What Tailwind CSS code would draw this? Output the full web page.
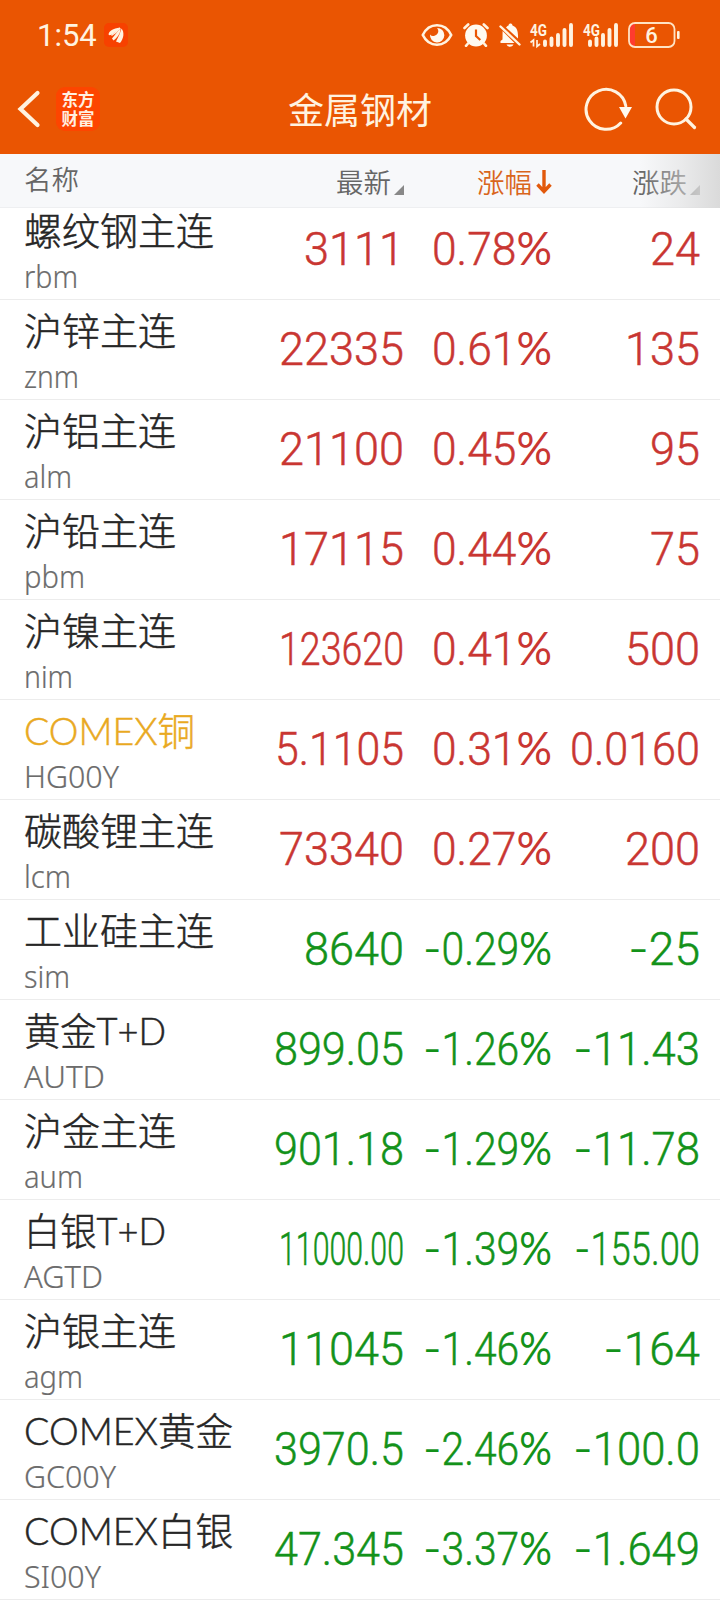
<!DOCTYPE html>
<html lang="zh-CN">
<head>
  <meta charset="UTF-8" />
  <title>金属钢材</title>
  <meta name="viewport" content="width=device-width, initial-scale=1" />
  <script src="https://cdn.jsdelivr.net/npm/@tailwindcss/browser@4"></script>
</head>
<body class="w-[720px] h-[1600px] overflow-hidden bg-white font-['Noto_Sans_CJK_SC',sans-serif]">

  <header class="h-[154px] bg-[#ea5502] text-[#fff3e0]">
    <!-- Status bar -->
    <div class="h-[70px] flex items-center pl-[37px] pr-[40px]">
      <span class="w-[59px] font-['Roboto',sans-serif] font-normal text-[31px] leading-none">1:54</span>
      <svg class="ml-2 w-6 h-6" viewBox="0 0 24 24">
        <rect width="24" height="24" rx="5" fill="#f74100" />
        <path d="M4.500 11.500C5 8 9 5.500 16 4.500C13 8 9 12 5.500 12.200ZM8 15.500C11 12 14 8 16.500 5C17 10 13 15 9.500 17.500ZM12 18.500C14.500 14 16.500 9 17.500 5.500C20.500 9 20 15.500 16 20Z" fill="#fff3e0" />
        <path d="M7.500 12.500C10 11 13.500 8 16 5" stroke="#fff3e0" stroke-width="1.200" fill="none" />
      </svg>
      <div class="ml-auto flex items-center">
        <!-- eye -->
        <svg class="w-8 h-6" viewBox="0 0 32 24">
          <path d="M1.800 12C8-1 24-1 30.200 12C24 25 8 25 1.800 12Z" fill="none" stroke="#fff3e0" stroke-width="2.600" />
          <path d="M16 5A7.200 7.200 0 1 1 9 11.500A4.200 4.200 0 0 0 14 12.500A4.500 4.500 0 0 0 16 5Z" fill="#fffaf0" />
        </svg>
        <!-- alarm -->
        <svg class="ml-2.5 w-[26px] h-6" viewBox="0 0 26 24">
          <circle cx="13" cy="12.500" r="10.900" fill="#fffaf0" />
          <path d="M1.500 5L5.200 1.500M24.500 5L20.800 1.500M5 20.500L3 22.800M21 20.500L23 22.800" stroke="#fff3e0" stroke-width="2.600" stroke-linecap="round" />
          <path d="M13 6.500V13L17.300 17" fill="none" stroke="#ea5502" stroke-width="2.200" />
        </svg>
        <!-- muted bell -->
        <svg class="ml-2.5 w-[22px] h-6" viewBox="0 0 22 24">
          <path d="M7 4.500C8 3 9 2.600 9.500 2.400C10-.2 13-.2 13.500 2.400C18 4 19.300 8 19 15.500L7 4.500ZM3.600 8L15.500 20H1.500V18L3.500 16.500ZM7.500 21.500H14.500C13 24.500 9 24.500 7.500 21.500Z" fill="#fffaf0" />
          <path d="M1.500 3.500L20.500 21.500" stroke="#fff3e0" stroke-width="2.400" stroke-linecap="round" />
        </svg>
        <!-- sim 1 -->
        <svg class="ml-[9px] w-[43px] h-6 overflow-visible" viewBox="0 0 43 24">
          <text x="0" y="12.500" textLength="17" lengthAdjust="spacingAndGlyphs" font-family="Roboto, sans-serif" font-size="16" font-weight="700" fill="#fff3e0">4G</text>
          <path d="M3.500 23.500V17L.5 19.500M7 17V23.500L10 21" fill="none" stroke="#fff3e0" stroke-width="1.700" />
          <path d="M15 18.500V22M21.500 15.500V22M28 12V22M34.500 7V22M41 2V22" stroke="#fff3e0" stroke-width="3.900" stroke-linecap="round" />
        </svg>
        <!-- sim 2 -->
        <svg class="ml-[10px] w-[35px] h-6 overflow-visible" viewBox="0 0 35 24">
          <text x="0" y="12.500" textLength="17" lengthAdjust="spacingAndGlyphs" font-family="Roboto, sans-serif" font-size="16" font-weight="700" fill="#fff3e0">4G</text>
          <path d="M7 18.500V22M13.500 15.500V22M20 12V22M26.500 7V22M33 2V22" stroke="#fff3e0" stroke-width="3.900" stroke-linecap="round" />
        </svg>
        <!-- battery -->
        <svg class="ml-[10px] w-[52px] h-[26px]" viewBox="0 0 52 26">
          <path d="M1 6Q2 1.500 7 1V25Q2 24 1 20Z" fill="#ff3b2f" />
          <rect x="1" y="1" width="45.500" height="24" rx="6" fill="none" stroke="#ffe3c4" stroke-width="1.800" />
          <rect x="49" y="9" width="2.600" height="8" rx="1" fill="#fff3e0" />
          <text x="23.500" y="20.500" text-anchor="middle" font-family="Roboto, sans-serif" font-size="22" font-weight="500" fill="#fff3e0">6</text>
        </svg>
      </div>
    </div>

    <!-- Title bar -->
    <div class="h-[78px] flex items-center pl-[17px] pr-[23px]">
      <svg class="w-6 h-10" viewBox="0 0 24 40">
        <path d="M20.500 4L3.500 20L20.500 36" fill="none" stroke="#fff3e0" stroke-width="4.200" stroke-linecap="round" />
      </svg>
      <div class="ml-[15px] w-11 h-11 rounded-[9px] bg-[#fd4500] flex flex-col items-center justify-center text-[16.500px] leading-[19px] font-bold text-[#fff0e0]">
        <span>东方</span>
        <span>财富</span>
      </div>
      <h1 class="flex-1 pl-[36px] -mt-[3px] text-center text-[36px] leading-[50px] font-normal">金属钢材</h1>
      <svg class="w-12 h-12" viewBox="0 0 48 48">
        <path d="M36.700 38A20 20 0 1 1 41.800 21" fill="none" stroke="#fff3e0" stroke-width="3" stroke-linecap="round" />
        <path d="M35 22H48L41.500 33.500Z" fill="#fffaf0" />
      </svg>
      <svg class="ml-[23px] w-[42px] h-[42px]" viewBox="0 0 42 42">
        <circle cx="19" cy="19" r="17" fill="none" stroke="#fff3e0" stroke-width="3" />
        <path d="M31 31L39.500 39.500" stroke="#fff3e0" stroke-width="3.200" stroke-linecap="round" />
      </svg>
    </div>
  </header>

  <!-- Column heads -->
  <div class="h-[54px] relative flex bg-[#f7f8fa] border-b border-[#eeeff1] font-[350] text-[27.500px] leading-[54px] text-[#666]">
    <div class="w-[200px] pl-[24px] -mt-[3px]">名称</div>
    <div class="w-[204px] flex justify-end">
      最新
      <svg class="ml-[3px] mt-[31px] w-2.5 h-2.5" viewBox="0 0 10 10"><path d="M10 0V10H0Z" fill="#888" /></svg>
    </div>
    <div class="w-[148px] flex justify-end text-[#d9651c]">
      涨幅
      <svg class="ml-1 mt-4 w-4 h-6" viewBox="0 0 16 24"><path d="M8 0V21M1.500 14.500L8 21.500L14.500 14.500" fill="none" stroke="#e2590c" stroke-width="3.400" /></svg>
    </div>
    <div class="w-[148px] flex justify-end">
      涨跌
      <svg class="ml-[3px] mt-[31px] w-2.5 h-2.5" viewBox="0 0 10 10"><path d="M10 0V10H0Z" fill="#888" /></svg>
    </div>
    <div class="absolute right-0 top-0 w-20 h-[54px] bg-linear-to-r from-[#dedede]/0 via-[#dedede]/50 to-[#dadada]"></div>
  </div>

  <main id="list" class="-mt-2"></main>

  <script>
    // name, name width, code, code width, then [text, width] for last / change % / change
    const rows = [
      ['螺纹钢主连', 190, 'rbm', 54, ['3111', 100], ['0.78%', 120], ['24', 50]],
      ['沪锌主连', 152, 'znm', 55, ['22335', 125], ['0.61%', 120], ['135', 75]],
      ['沪铝主连', 152, 'alm', 48, ['21100', 125], ['0.45%', 120], ['95', 50]],
      ['沪铅主连', 152, 'pbm', 61, ['17115', 125], ['0.44%', 120], ['75', 50]],
      ['沪镍主连', 152, 'nim', 49, ['123620', 125], ['0.41%', 120], ['500', 75]],
      ['COMEX铜', 171, 'HG00Y', 95, ['5.1105', 129], ['0.31%', 120], ['0.0160', 130]],
      ['碳酸锂主连', 190, 'lcm', 47, ['73340', 125], ['0.27%', 120], ['200', 75]],
      ['工业硅主连', 190, 'sim', 46, ['8640', 100], ['-0.29%', 129], ['-25', 72]],
      ['黄金T+D', 142, 'AUTD', 81, ['899.05', 130], ['-1.26%', 129], ['-11.43', 127]],
      ['沪金主连', 152, 'aum', 59, ['901.18', 130], ['-1.29%', 129], ['-11.78', 127]],
      ['白银T+D', 142, 'AGTD', 79, ['11000.00', 125], ['-1.39%', 129], ['-155.00', 126]],
      ['沪银主连', 152, 'agm', 59, ['11045', 125], ['-1.46%', 129], ['-164', 97]],
      ['COMEX黄金', 209, 'GC00Y', 92, ['3970.5', 130], ['-2.46%', 129], ['-100.0', 127]],
      ['COMEX白银', 209, 'SI00Y', 77, ['47.345', 130], ['-3.37%', 129], ['-1.649', 127]],
    ];

    // one line of text squeezed or stretched to the given width
    function fit(text, width, height, baseline, cls) {
      return `<svg width="${width}" height="${height}" class="overflow-visible fill-current stroke-current ${cls}"><text y="${baseline}" textLength="${width}" lengthAdjust="spacingAndGlyphs">${text}</text></svg>`;
    }

    function num([text, width]) {
      const label = text
        .replace('-', `<tspan class="font-['Inter',sans-serif] stroke-none">-</tspan>`)
        .replace('%', `<tspan class="font-['Lato',sans-serif] font-normal stroke-none">%</tspan>`);
      return fit(label, width, 62, 47, 'justify-self-end stroke-[0.5px]');
    }

    document.getElementById('list').innerHTML = rows.map(([name, nw, code, cw, last, pct, diff]) => {
      const tone = pct[0].startsWith('-') ? 'text-[#13921a]' : 'text-[#c93632]';
      const nameTone = name === 'COMEX铜' ? 'text-[#e9a91f]' : 'text-[#262626]';
      return `
        <div class="h-[100px] flex border-b border-[#ececec]">
          <div class="w-[240px] pl-[24px] pt-[7px]">
            ${fit(name, nw, 48, 38, `font-['Lato','Noto_Sans_CJK_SC',sans-serif] font-light text-[38px] stroke-[0.5px] ${nameTone}`)}
            ${fit(code, cw, 40, 32.5, `font-['Noto_Sans',sans-serif] font-light text-[31px] stroke-[0.2px] text-[#6c6c6c]`)}
          </div>
          <div class="w-[460px] pt-[18px] grid grid-cols-[164px_148px_148px] font-['Roboto',sans-serif] font-light text-[46px] ${tone}">
            ${num(last)}${num(pct)}${num(diff)}
          </div>
        </div>`;
    }).join('');
  </script>
</body>
</html>
